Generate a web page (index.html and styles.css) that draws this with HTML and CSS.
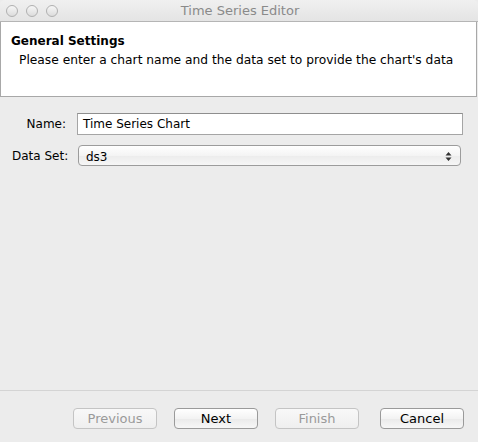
FILE: index.html
```html
<!DOCTYPE html>
<html>
<head>
<meta charset="utf-8">
<link rel="stylesheet" href="styles.css">
</head>
<body>
<div class="window">
  <div class="titlebar">
    <div class="lights">
      <span class="light"></span><span class="light"></span><span class="light"></span>
    </div>
    <div class="title">Time Series Editor</div>
  </div>
  <div class="header">
    <div class="h-title">General Settings</div>
    <div class="h-desc">Please enter a chart name and the data set to provide the chart's data</div>
  </div>
  <div class="body">
    <div class="form">
      <label class="lbl">Name:</label>
      <div class="field">Time Series Chart</div>
      <label class="lbl">Data Set:</label>
      <div class="combo">
        <span>ds3</span>
        <svg class="arrows" width="7" height="11" viewBox="0 0 7 11"><path d="M3.5 1 L6.5 4.5 L0.5 4.5 Z M3.5 10 L6.5 6.5 L0.5 6.5 Z" fill="#333"/></svg>
      </div>
    </div>
  </div>
  <div class="footer">
    <button class="btn disabled">Previous</button>
    <button class="btn">Next</button>
    <button class="btn disabled">Finish</button>
    <button class="btn cancel">Cancel</button>
  </div>
</div>
</body>
</html>
```
FILE: styles.css
```css
* { box-sizing: border-box; }
html, body { margin: 0; padding: 0; }
body {
  width: 478px;
  height: 442px;
  background: #ececec;
  font-family: "DejaVu Sans", "Lucida Grande", sans-serif;
  font-size: 12px;
  color: #000;
  overflow: hidden;
}
.window {
  width: 478px;
  height: 442px;
  display: flex;
  flex-direction: column;
  background: #ececec;
}
.titlebar {
  height: 22px;
  background: linear-gradient(#f0f0f0, #e4e4e4);
  border-bottom: 1px solid #b5b5b5;
  display: flex;
  align-items: center;
  border-top-right-radius: 5px;
  border-top-left-radius: 5px;
}
.lights {
  display: flex;
  gap: 8px;
  padding-left: 6px;
}
.light {
  width: 12px;
  height: 12px;
  border-radius: 50%;
  border: 1px solid #b0b0b0;
  background: linear-gradient(#f6f6f6, #dcdcdc);
}
.title {
  flex: 1;
  text-align: center;
  color: #8a8a8a;
  font-size: 13px;
  margin-left: -56px;
}
.header {
  height: 75px;
  background: #fff;
  border: 1px solid #a8a8a8;
  border-top: none;
  margin-right: 1px;
  padding: 12px 0 0 10px;
}
.h-title {
  font-weight: bold;
  font-size: 12px;
  height: 19px;
}
.h-desc {
  padding-left: 8px;
  font-size: 12.25px;
}
.body {
  flex: 1;
  padding: 16px 15px 0 12px;
}
.form {
  display: grid;
  grid-template-columns: 54px 1fr;
  column-gap: 11px;
  row-gap: 10px;
  align-items: center;
}
.lbl { text-align: right; white-space: nowrap; }
.field {
  height: 22px;
  background: #fff;
  border: 1px solid #a5a5a5;
  border-top-color: #8e8e8e;
  padding: 3px 5px;
}
.combo {
  height: 21px;
  margin: 0 2px 0 1px;
  border: 1px solid #9c9c9c;
  border-radius: 4px;
  background: linear-gradient(#ffffff, #f4f4f4 50%, #ececec 51%, #f6f6f6);
  padding: 2px 8px 0 7px;
  display: flex;
  align-items: center;
  justify-content: space-between;
}
.footer {
  height: 52px;
  border-top: 1px solid #d4d4d4;
  display: flex;
  align-items: center;
  padding: 3px 0 0 73px;
  gap: 17px;
}
.btn {
  font-family: inherit;
  font-size: 13px;
  height: 21px;
  width: 84px;
  padding: 0;
  border: 1px solid #9a9a9a;
  border-radius: 4px;
  background: linear-gradient(#ffffff, #f3f3f3 50%, #eaeaea 51%, #f7f7f7);
  color: #000;
}
.btn.disabled {
  color: #9a9a9a;
  border-color: #c4c4c4;
  background: linear-gradient(#f8f8f8, #efefef);
}
.btn.cancel { margin-left: 4px; }
```
